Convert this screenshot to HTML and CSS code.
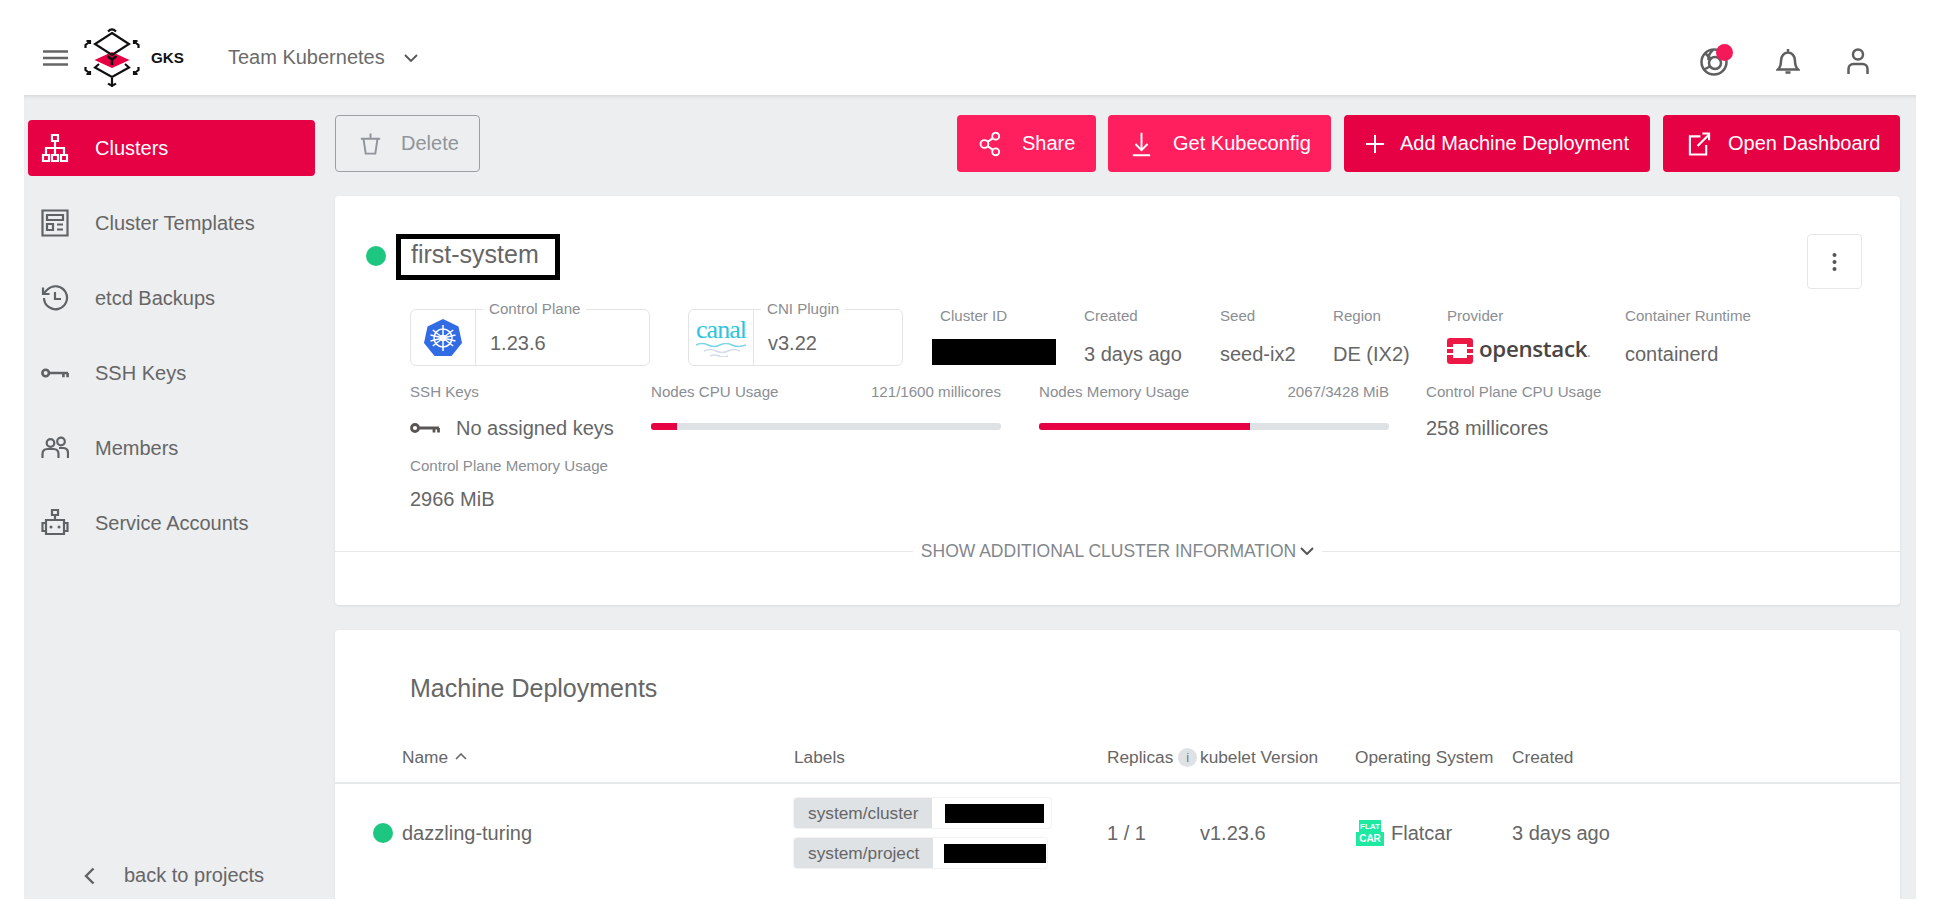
FILE: index.html
```html
<!DOCTYPE html>
<html lang="en">
<head>
    <meta charset="UTF-8">
    <title>GKS - first-system</title>
    <link rel="stylesheet" href="styles.css">
</head>
<body>
    <header class="topbar">
        <div class="topbar-left">
            <svg class="burger" viewBox="0 0 25 16"><path d="M0 1.500h25M0 8h25M0 14.500h25"/></svg>
            <svg class="logo" viewBox="0 0 58 62">
                <path class="logo-line" d="M16 37l-4 3.500L29 50l17-9.500-4-3.500"/>
                <path class="logo-red" d="M29 25l17.500 8L29 41 11.500 33z"/>
                <path class="logo-line" d="M29 6l17 11-17 11-17-11z"/>
                <path class="logo-line" d="M25 4.500Q29 .5 33 4.500M29 51v9M25 56.500Q29 60 33 56.500"/>
                <path class="logo-line" d="M7 14.500L2.500 18v3M3.500 14h3.500v3M51 14.500l4.500 3.500v3M54.500 14H51v3M7 46.500L2.500 43v-3M3.500 47H7v-3M51 46.500l4.500-3.500v-3M54.500 47H51v-3"/>
                <path class="logo-y" d="M24.500 29l4.500 3.500 4.500-3.500M29 32.500V38"/>
            </svg>
            <span class="brand">GKS</span>
            <span class="team">Team Kubernetes</span>
            <svg class="team-chevron" viewBox="0 0 14 8"><path d="M1 1l6 6 6-6"/></svg>
        </div>
        <div class="topbar-right">
            <div class="help">
                <svg class="top-icon" viewBox="0 0 29 28"><circle cx="14" cy="14" r="12.500"/><circle cx="15" cy="15" r="6"/><path d="M5 5l5.500 5.500M4 21.500l6-3M13 2c-3 2.500-5 6-4.500 10"/></svg>
                <span class="help-dot"></span>
            </div>
            <svg class="top-icon bell" viewBox="0 0 24 27"><path d="M2 21.500c2-2 3-3.500 3-8.500 0-5 3-8.500 7-8.500s7 3.500 7 8.500c0 5 1 6.500 3 8.500zM12 1v3.500M9.500 24.500h5"/></svg>
            <svg class="top-icon user" viewBox="0 0 22 27"><circle cx="11" cy="6.500" r="5"/><path d="M1.500 26v-5c0-3 2-5 5-5h9c3 0 5 2 5 5v5"/></svg>
        </div>
    </header>

    <div class="shell">
        <nav class="sidebar">
            <ul class="nav-list">
                <li class="nav-item nav-active">
                    <svg class="nav-icon" viewBox="0 0 28 28"><path d="M11 1h6v6h-6zM14 7v7M5 21v-7h18v7M14 14v7M2 21h6v6H2zM11 21h6v6h-6zM20 21h6v6h-6z"/></svg>
                    <span>Clusters</span>
                </li>
                <li class="nav-item">
                    <svg class="nav-icon" viewBox="0 0 28 28"><path d="M1.500 1.500h25v25h-25zM6 6h16v5H6zM6 15h6v6H6zM16 15.500h6M16 20.500h6"/></svg>
                    <span>Cluster Templates</span>
                </li>
                <li class="nav-item">
                    <svg class="nav-icon" viewBox="0 0 28 28"><path d="M3 14a11.500 11.500 0 1 0 3.500-8.500L2 10M2 3.500V10h6.500M14 8v7h6"/></svg>
                    <span>etcd Backups</span>
                </li>
                <li class="nav-item">
                    <svg class="nav-icon nav-key" viewBox="0 0 30 14"><circle cx="5" cy="7" r="3.500"/><path d="M8.500 7H29M24 7v4.500M28.500 7v4.500"/></svg>
                    <span>SSH Keys</span>
                </li>
                <li class="nav-item">
                    <svg class="nav-icon" viewBox="0 0 28 28"><circle cx="9.500" cy="9" r="3.800"/><circle cx="20" cy="7.500" r="3.800"/><path d="M1.500 24v-4c0-3 2-5 5-5h6c3 0 5 2 5 5v4M18 14h4c3 0 5 2 5 5v5"/></svg>
                    <span>Members</span>
                </li>
                <li class="nav-item">
                    <svg class="nav-icon" viewBox="0 0 28 28"><path d="M11 1h6v5h-6zM14 6v5M5 11h18v14H5zM5 14H1.500v8H5M23 14h3.500v8H23"/><circle class="icon-fill" cx="10" cy="18" r="1.500"/><circle class="icon-fill" cx="18" cy="18" r="1.500"/></svg>
                    <span>Service Accounts</span>
                </li>
            </ul>
            <div class="back-link">
                <svg class="back-chevron" viewBox="0 0 11 18"><path d="M9.500 1.500L2 9l7.500 7.500"/></svg>
                <span>back to projects</span>
            </div>
        </nav>

        <main class="content">
            <div class="actions">
                <button class="btn btn-disabled">
                    <svg class="btn-icon" viewBox="0 0 24 26"><path d="M1 7h22M12 1v6M4 7l2.500 17h11L20 7"/></svg>
                    Delete
                </button>
                <div class="actions-right">
                    <button class="btn btn-light btn-share">
                        <svg class="btn-icon" viewBox="0 0 26 30"><circle cx="19" cy="6" r="4"/><circle cx="6" cy="15" r="4.500"/><circle cx="19" cy="24" r="4"/><path d="M9.500 12.500l6-4M9.500 17.500l6 4"/></svg>
                        Share
                    </button>
                    <button class="btn btn-light btn-kube">
                        <svg class="btn-icon" viewBox="0 0 26 30"><path d="M13 2v20M6 15l7 7 7-7M3 28h20"/></svg>
                        Get Kubeconfig
                    </button>
                    <button class="btn btn-dark btn-add">
                        <svg class="btn-icon" viewBox="0 0 22 22"><path d="M11 1v20M1 11h20"/></svg>
                        Add Machine Deployment
                    </button>
                    <button class="btn btn-dark btn-open">
                        <svg class="btn-icon" viewBox="0 0 24 26"><path d="M13 5H2v19h17V14M10 15L22 3M15 2h7v7"/></svg>
                        Open Dashboard
                    </button>
                </div>
            </div>

            <section class="card card-cluster">
                <div class="cluster-head">
                    <span class="dot"></span>
                    <h1 class="cluster-name">first-system</h1>
                    <button class="more-btn">
                        <svg viewBox="0 0 4 20" class="more-icon"><circle cx="2" cy="3" r="2"/><circle cx="2" cy="10" r="2"/><circle cx="2" cy="17" r="2"/></svg>
                    </button>
                </div>

                <div class="meta-row meta-first">
                    <div class="version-box box-cp">
                        <div class="box-logo">
                            <svg class="k8s" viewBox="0 0 38 37">
                                <path class="k8s-hept" d="M19 0l15.500 7.500L38 24 27.500 37h-17L0 24 3.500 7.500z"/>
                                <circle class="k8s-line" cx="19" cy="19" r="9"/>
                                <circle class="k8s-line" cx="19" cy="19" r="2.500"/>
                                <path class="k8s-line" d="M19 6v26M8.800 11l20.400 16M29.200 11L8.800 27M6.500 22l25-6M31.500 22l-25-6"/>
                            </svg>
                        </div>
                        <span class="box-label">Control Plane</span>
                        <span class="box-value">1.23.6</span>
                    </div>
                    <div class="version-box box-cni">
                        <div class="box-logo">
                            <div class="canal">
                                <span>canal</span>
                                <svg class="canal-waves" viewBox="0 0 50 14"><path d="M0 2q6-3 12 0t12 0 12 0 14 0"/><path class="wave-pale" d="M8 8q6-3 12 0t12 0 12 0M14 13q5-2 9 0t9 0"/></svg>
                            </div>
                        </div>
                        <span class="box-label">CNI Plugin</span>
                        <span class="box-value">v3.22</span>
                    </div>
                    <div class="meta-item">
                        <span class="meta-label meta-id-label">Cluster ID</span>
                        <span class="redacted redacted-id"></span>
                    </div>
                    <div class="meta-item">
                        <span class="meta-label">Created</span>
                        <span class="meta-value">3 days ago</span>
                    </div>
                    <div class="meta-item">
                        <span class="meta-label">Seed</span>
                        <span class="meta-value">seed-ix2</span>
                    </div>
                    <div class="meta-item">
                        <span class="meta-label">Region</span>
                        <span class="meta-value">DE (IX2)</span>
                    </div>
                    <div class="meta-item">
                        <span class="meta-label">Provider</span>
                        <div class="openstack">
                            <svg class="os-mark" viewBox="0 0 26 26"><path d="M3 0h20a3 3 0 0 1 3 3v6h-6V6H6v3H0V3a3 3 0 0 1 3-3zM0 11h6v4H0zM20 11h6v4h-6zM0 17h6v3h14v-3h6v6a3 3 0 0 1-3 3H3a3 3 0 0 1-3-3z"/></svg>
                            <span>openstack<small>.</small></span>
                        </div>
                    </div>
                    <div class="meta-item">
                        <span class="meta-label">Container Runtime</span>
                        <span class="meta-value">containerd</span>
                    </div>
                </div>

                <div class="meta-row meta-second">
                    <div class="meta-item">
                        <span class="meta-label">SSH Keys</span>
                        <div class="no-keys">
                            <svg class="key-icon" viewBox="0 0 30 14"><circle cx="5" cy="7" r="3.500"/><path d="M8.500 7H29M24 7v4.500M28.500 7v4.500"/></svg>
                            <span>No assigned keys</span>
                        </div>
                    </div>
                    <div class="usage">
                        <div class="usage-head"><span>Nodes CPU Usage</span><span>121/1600 millicores</span></div>
                        <div class="bar"><div class="bar-fill" style="width: 7.560%"></div></div>
                    </div>
                    <div class="usage">
                        <div class="usage-head"><span>Nodes Memory Usage</span><span>2067/3428 MiB</span></div>
                        <div class="bar"><div class="bar-fill" style="width: 60.300%"></div></div>
                    </div>
                    <div class="meta-item">
                        <span class="meta-label">Control Plane CPU Usage</span>
                        <span class="meta-value">258 millicores</span>
                    </div>
                </div>

                <div class="meta-item meta-third">
                    <span class="meta-label">Control Plane Memory Usage</span>
                    <span class="meta-value">2966 MiB</span>
                </div>

                <div class="more-info">
                    <span>SHOW ADDITIONAL CLUSTER INFORMATION</span>
                    <svg class="more-chevron" viewBox="0 0 14 8"><path d="M1 1l6 6 6-6"/></svg>
                </div>
            </section>

            <section class="card card-md">
                <h2 class="md-title">Machine Deployments</h2>
                <table class="md-table">
                    <colgroup>
                        <col class="col-name"><col class="col-labels"><col class="col-replicas">
                        <col class="col-kubelet"><col class="col-os"><col>
                    </colgroup>
                    <thead>
                        <tr>
                            <th class="cell-name">Name <svg class="sort-icon" viewBox="0 0 12 7"><path d="M1 6l5-5 5 5"/></svg></th>
                            <th>Labels</th>
                            <th><span class="replicas-head">Replicas <span class="info-badge">i</span></span></th>
                            <th>kubelet Version</th>
                            <th>Operating System</th>
                            <th>Created</th>
                        </tr>
                    </thead>
                    <tbody>
                        <tr>
                            <td class="cell-name cell-status"><span class="dot"></span>dazzling-turing</td>
                            <td>
                                <div class="chips">
                                    <div class="chip chip-cluster"><span class="chip-key">system/cluster</span><span class="redacted redacted-a"></span></div>
                                    <div class="chip chip-project"><span class="chip-key">system/project</span><span class="redacted redacted-b"></span></div>
                                </div>
                            </td>
                            <td>1 / 1</td>
                            <td>v1.23.6</td>
                            <td>
                                <span class="os-name">
                                    <svg class="flatcar" viewBox="0 0 30 28">
                                        <path class="flatcar-body" d="M4 1h22v12h3v14H1V13h3z"/>
                                        <text x="15" y="10" class="flatcar-text flatcar-small">FLAT</text>
                                        <text x="15" y="23" class="flatcar-text">CAR</text>
                                    </svg>
                                    Flatcar
                                </span>
                            </td>
                            <td>3 days ago</td>
                        </tr>
                    </tbody>
                </table>
            </section>
        </main>
    </div>
</body>
</html>
```

FILE: styles.css
```css
* {
    box-sizing: border-box;
}
html, body {
    margin: 0;
    height: 920px;
    overflow: hidden;
    background: #fff;
}
body {
    font-family: "Liberation Sans", Arial, sans-serif;
    font-size: 20px;
    color: #666;
}
svg {
    display: block;
    flex: none;
}
svg path, svg circle {
    fill: none;
    stroke: currentColor;
}

/* top bar */
.topbar {
    height: 95px;
    display: flex;
    justify-content: space-between;
    align-items: center;
    padding: 20px 68px 0 43px;
    position: relative;
    z-index: 2;
}
.topbar-left, .topbar-right {
    display: flex;
    align-items: center;
}
.topbar-right {
    margin-top: 8px;
}
.burger {
    width: 25px;
    height: 16px;
    color: #666;
    stroke-width: 2.400px;
}
.logo {
    width: 58px;
    height: 62px;
    margin: 0 0 0 15px;
    color: #111;
}
.logo .logo-red {
    fill: #e60044;
    stroke: none;
}
.logo .logo-line {
    stroke-width: 2.200px;
}
.logo .logo-y {
    stroke-width: 2.600px;
}
.brand {
    margin-left: 10px;
    font-size: 15.200px;
    font-weight: bold;
    color: #111;
}
.team {
    margin-left: 44px;
    color: #6b6b6b;
}
.team-chevron {
    width: 14px;
    height: 8px;
    margin-left: 19px;
    color: #555;
    stroke-width: 1.800px;
}
.top-icon {
    color: #5f5f5f;
    stroke-width: 2.500px;
}
.help {
    position: relative;
    margin-right: 47px;
}
.help .top-icon {
    width: 29px;
    height: 28px;
}
.help-dot {
    position: absolute;
    top: -4px;
    left: 16px;
    width: 17px;
    height: 17px;
    border-radius: 50%;
    background: #f5195a;
}
.bell {
    width: 24px;
    height: 27px;
    margin-right: 47px;
}
.user {
    width: 22px;
    height: 27px;
}

/* shell */
.shell {
    height: 804px;
    margin: 0 21px 0 24px;
    display: flex;
    background: #edeef0;
    box-shadow: inset 0 4px 4px -3px rgba(0, 0, 0, 0.12);
    overflow: hidden;
}
.sidebar {
    width: 311px;
    flex: none;
    padding: 25px 20px 12px 4px;
    display: flex;
    flex-direction: column;
    justify-content: space-between;
}
.nav-list {
    list-style: none;
    margin: 0;
    padding: 0;
}
.nav-item {
    height: 56px;
    margin-bottom: 19px;
    padding-left: 13px;
    display: flex;
    align-items: center;
    gap: 26px;
    border-radius: 4px;
    color: #666;
}
.nav-icon {
    width: 28px;
    height: 28px;
    color: #5f6366;
    stroke-width: 2.200px;
}
.nav-icon .icon-fill {
    fill: currentColor;
    stroke: none;
}
.nav-key {
    height: 14px;
    stroke-width: 2.800px;
}
.nav-active {
    background: #e60044;
    color: #fff;
}
.nav-active .nav-icon {
    color: #fff;
}
.back-link {
    display: flex;
    align-items: center;
    gap: 29px;
    padding-left: 56px;
}
.back-chevron {
    width: 11px;
    height: 18px;
    color: #5f6366;
    stroke-width: 2.400px;
}

/* content */
.content {
    flex: 1;
    min-width: 0;
    padding: 20px 16px 0 0;
}
.actions {
    display: flex;
    justify-content: space-between;
    height: 57px;
}
.actions-right {
    display: flex;
    gap: 13px;
}
.btn {
    display: inline-flex;
    align-items: center;
    height: 57px;
    padding: 0 0 0 22px;
    gap: 20px;
    border: 0;
    border-radius: 4px;
    color: #fff;
    font-family: inherit;
    font-size: 20px;
    white-space: nowrap;
}
.btn-icon {
    width: 23px;
    height: 26px;
    stroke-width: 2.200px;
}
.btn-light {
    background: #ff1e5e;
}
.btn-dark {
    background: #e60044;
}
.btn-share {
    width: 139px;
    margin-right: -1px;
}
.btn-kube {
    width: 223px;
}
.btn-add {
    width: 306px;
    padding-left: 21px;
    gap: 15px;
}
.btn-add .btn-icon {
    width: 20px;
    height: 20px;
}
.btn-open {
    width: 237px;
    padding-left: 25px;
    gap: 17px;
}
.btn-disabled {
    width: 145px;
    padding-left: 24px;
    gap: 20px;
    background: transparent;
    border: 1px solid #9aa0a6;
    color: #90959b;
}
.btn-disabled .btn-icon {
    width: 21px;
}
.card {
    background: #fff;
    border-radius: 4px;
    box-shadow: 0 1px 3px rgba(0, 0, 0, 0.08);
}
.card-cluster {
    height: 409px;
    margin-top: 24px;
    padding: 38px 0 0 75px;
    position: relative;
}
.cluster-head {
    display: flex;
    align-items: flex-start;
    height: 55px;
    padding-right: 38px;
}
.dot {
    width: 20px;
    height: 20px;
    flex: none;
    border-radius: 50%;
    background: #1ec781;
}
.cluster-head .dot {
    margin: 12px 10px 0 -44px;
}
.cluster-name {
    width: 164px;
    height: 46px;
    margin: 0;
    padding: 0 0 6px 10px;
    border: 5px solid #000;
    display: flex;
    align-items: center;
    font-size: 25px;
    font-weight: normal;
    color: #666;
}
.more-btn {
    width: 55px;
    height: 55px;
    margin-left: auto;
    display: flex;
    align-items: center;
    justify-content: center;
    background: #fff;
    border: 1px solid #e6e7e9;
    border-radius: 4px;
}
.more-icon {
    width: 5px;
    height: 20px;
    color: #555;
}
.more-icon circle {
    fill: currentColor;
    stroke: none;
}

/* cluster meta */
.meta-row {
    display: grid;
    padding-right: 20px;
}
.meta-first {
    grid-template-columns: 278px 244px 152px 136px 113px 114px 178px auto;
    margin-top: 11px;
    height: 66px;
}
.meta-second {
    grid-template-columns: 241px 388px 387px auto;
    margin-top: 17px;
}
.meta-third {
    margin-top: 17px;
}
.meta-third .meta-value {
    margin-top: 12px;
}
.meta-item {
    display: flex;
    flex-direction: column;
    align-items: flex-start;
}
.meta-label, .box-label, .usage-head {
    font-size: 15.100px;
    line-height: 18px;
    color: #8a8e93;
}
.meta-value {
    margin-top: 15px;
    line-height: 24px;
    color: #666;
}
.meta-first .meta-item {
    padding-top: 7px;
}
.meta-first .meta-value {
    margin-top: 17px;
}
.meta-id-label {
    margin-left: 8px;
}
.redacted {
    display: block;
    flex: none;
    background: #000;
}
.redacted-id {
    width: 124px;
    height: 26px;
    margin-top: 14px;
}
.version-box {
    position: relative;
    display: flex;
    align-items: center;
    height: 57px;
    margin-top: 9px;
    border: 1px solid #e3e4e6;
    border-radius: 6px;
}
.box-cp {
    width: 240px;
}
.box-cni {
    width: 215px;
}
.box-logo {
    width: 65px;
    height: 100%;
    flex: none;
    display: flex;
    align-items: center;
    justify-content: center;
    border-right: 1px solid #e3e4e6;
}
.box-label {
    position: absolute;
    top: -10px;
    left: 72px;
    padding: 0 6px;
    background: #fff;
}
.box-value {
    margin-left: 14px;
    padding-top: 12px;
}
.k8s {
    width: 38px;
    height: 37px;
}
.k8s .k8s-hept {
    fill: #326ce5;
    stroke: none;
}
.k8s .k8s-line {
    stroke: #fff;
    stroke-width: 1.500px;
}
.canal {
    width: 50px;
    font-family: "Liberation Serif", serif;
    font-size: 26px;
    line-height: 22px;
    letter-spacing: -1px;
    color: #2cc4dc;
    text-align: center;
}
.canal-waves {
    width: 50px;
    height: 14px;
    margin-top: 2px;
    color: #7fd4e6;
    stroke-width: 1.500px;
}
.canal-waves .wave-pale {
    stroke: #d4dcea;
}
.openstack {
    display: flex;
    align-items: center;
    gap: 6px;
    margin-top: 11px;
    font-family: "Open Sans", sans-serif;
    font-size: 22.300px;
    font-weight: 600;
    letter-spacing: -0.300px;
    color: #4a4543;
    line-height: 26px;
}
.openstack small {
    font-size: 12px;
    color: #999;
}
.os-mark {
    width: 26px;
    height: 26px;
}
.os-mark path {
    fill: #ed1944;
    stroke: none;
}
.no-keys {
    display: flex;
    align-items: center;
    gap: 16px;
    margin-top: 15px;
    line-height: 24px;
}
.key-icon {
    width: 30px;
    height: 14px;
    color: #5a5555;
    stroke-width: 2.800px;
}
.usage {
    width: 350px;
}
.usage-head {
    display: flex;
    justify-content: space-between;
}
.bar {
    height: 7px;
    margin-top: 22px;
    background: #dfe2e5;
    border-radius: 3px;
    overflow: hidden;
}
.bar-fill {
    height: 100%;
    background: #e60044;
}
.more-info {
    position: absolute;
    top: 345px;
    left: 0;
    right: 0;
    display: flex;
    align-items: center;
    justify-content: center;
    gap: 4px;
    font-size: 17.500px;
    line-height: 20px;
    color: #83878c;
}
.more-info::before, .more-info::after {
    content: "";
    flex: 1;
    height: 1px;
    background: #e6e7e9;
}
.more-info::before {
    margin-right: 4px;
}
.more-info::after {
    margin-left: 4px;
}
.more-chevron {
    width: 14px;
    height: 8px;
    color: #555;
    stroke-width: 2px;
}

/* machine deployments */
.card-md {
    height: 300px;
    margin-top: 25px;
    padding-top: 43px;
}
.md-title {
    margin: 0 0 0 75px;
    font-size: 25px;
    line-height: 30px;
    font-weight: normal;
    color: #666;
}
.md-table {
    width: 100%;
    margin-top: 30px;
    border-collapse: collapse;
    table-layout: fixed;
    font-size: 20px;
}
.col-name {
    width: 459px;
}
.col-labels {
    width: 313px;
}
.col-replicas {
    width: 93px;
}
.col-kubelet {
    width: 155px;
}
.col-os {
    width: 157px;
}
.md-table th {
    height: 50px;
    padding: 0;
    border-bottom: 2px solid #e8e9eb;
    font-size: 17.300px;
    font-weight: normal;
    text-align: left;
    white-space: nowrap;
    color: #666;
}
.md-table td {
    height: 99px;
    padding: 0;
}
.md-table .cell-name {
    padding-left: 67px;
}
.md-table .cell-status {
    padding-left: 38px;
}
.cell-status .dot {
    display: inline-block;
    vertical-align: -3px;
    margin-right: 9px;
}
.sort-icon {
    display: inline-block;
    width: 12px;
    height: 7px;
    margin: 0 0 3px 2px;
    stroke-width: 1.600px;
}
.replicas-head {
    display: inline-flex;
    align-items: center;
    gap: 5px;
}
.info-badge {
    width: 19px;
    height: 19px;
    flex: none;
    border-radius: 50%;
    background: #dfe2e5;
    font-size: 13px;
    line-height: 19px;
    text-align: center;
    color: #777;
}
.chips {
    display: flex;
    flex-direction: column;
    gap: 10px;
}
.chip {
    height: 30px;
    display: flex;
    align-items: stretch;
    background: #fff;
    border-radius: 3px;
    box-shadow: 0 0 2px rgba(0, 0, 0, 0.18);
    font-size: 17.300px;
}
.chip-cluster {
    width: 257px;
}
.chip-project {
    width: 253px;
}
.chip-key {
    padding: 0 14px;
    display: flex;
    align-items: center;
    background: #dfe2e5;
    border-radius: 3px 0 0 3px;
    color: #666;
}
.redacted-a, .redacted-b {
    height: 19px;
    align-self: center;
}
.redacted-a {
    width: 99px;
    margin-left: 13px;
}
.redacted-b {
    width: 102px;
    margin-left: 11px;
}
.os-name {
    display: inline-flex;
    align-items: center;
    gap: 6px;
    vertical-align: middle;
}
.flatcar {
    width: 30px;
    height: 28px;
}
.flatcar .flatcar-body {
    fill: #1de9a0;
    stroke: none;
}
.flatcar-text {
    font-family: "Liberation Sans", sans-serif;
    font-size: 10px;
    font-weight: bold;
    fill: #fff;
    text-anchor: middle;
}
.flatcar-small {
    font-size: 8px;
}
```
